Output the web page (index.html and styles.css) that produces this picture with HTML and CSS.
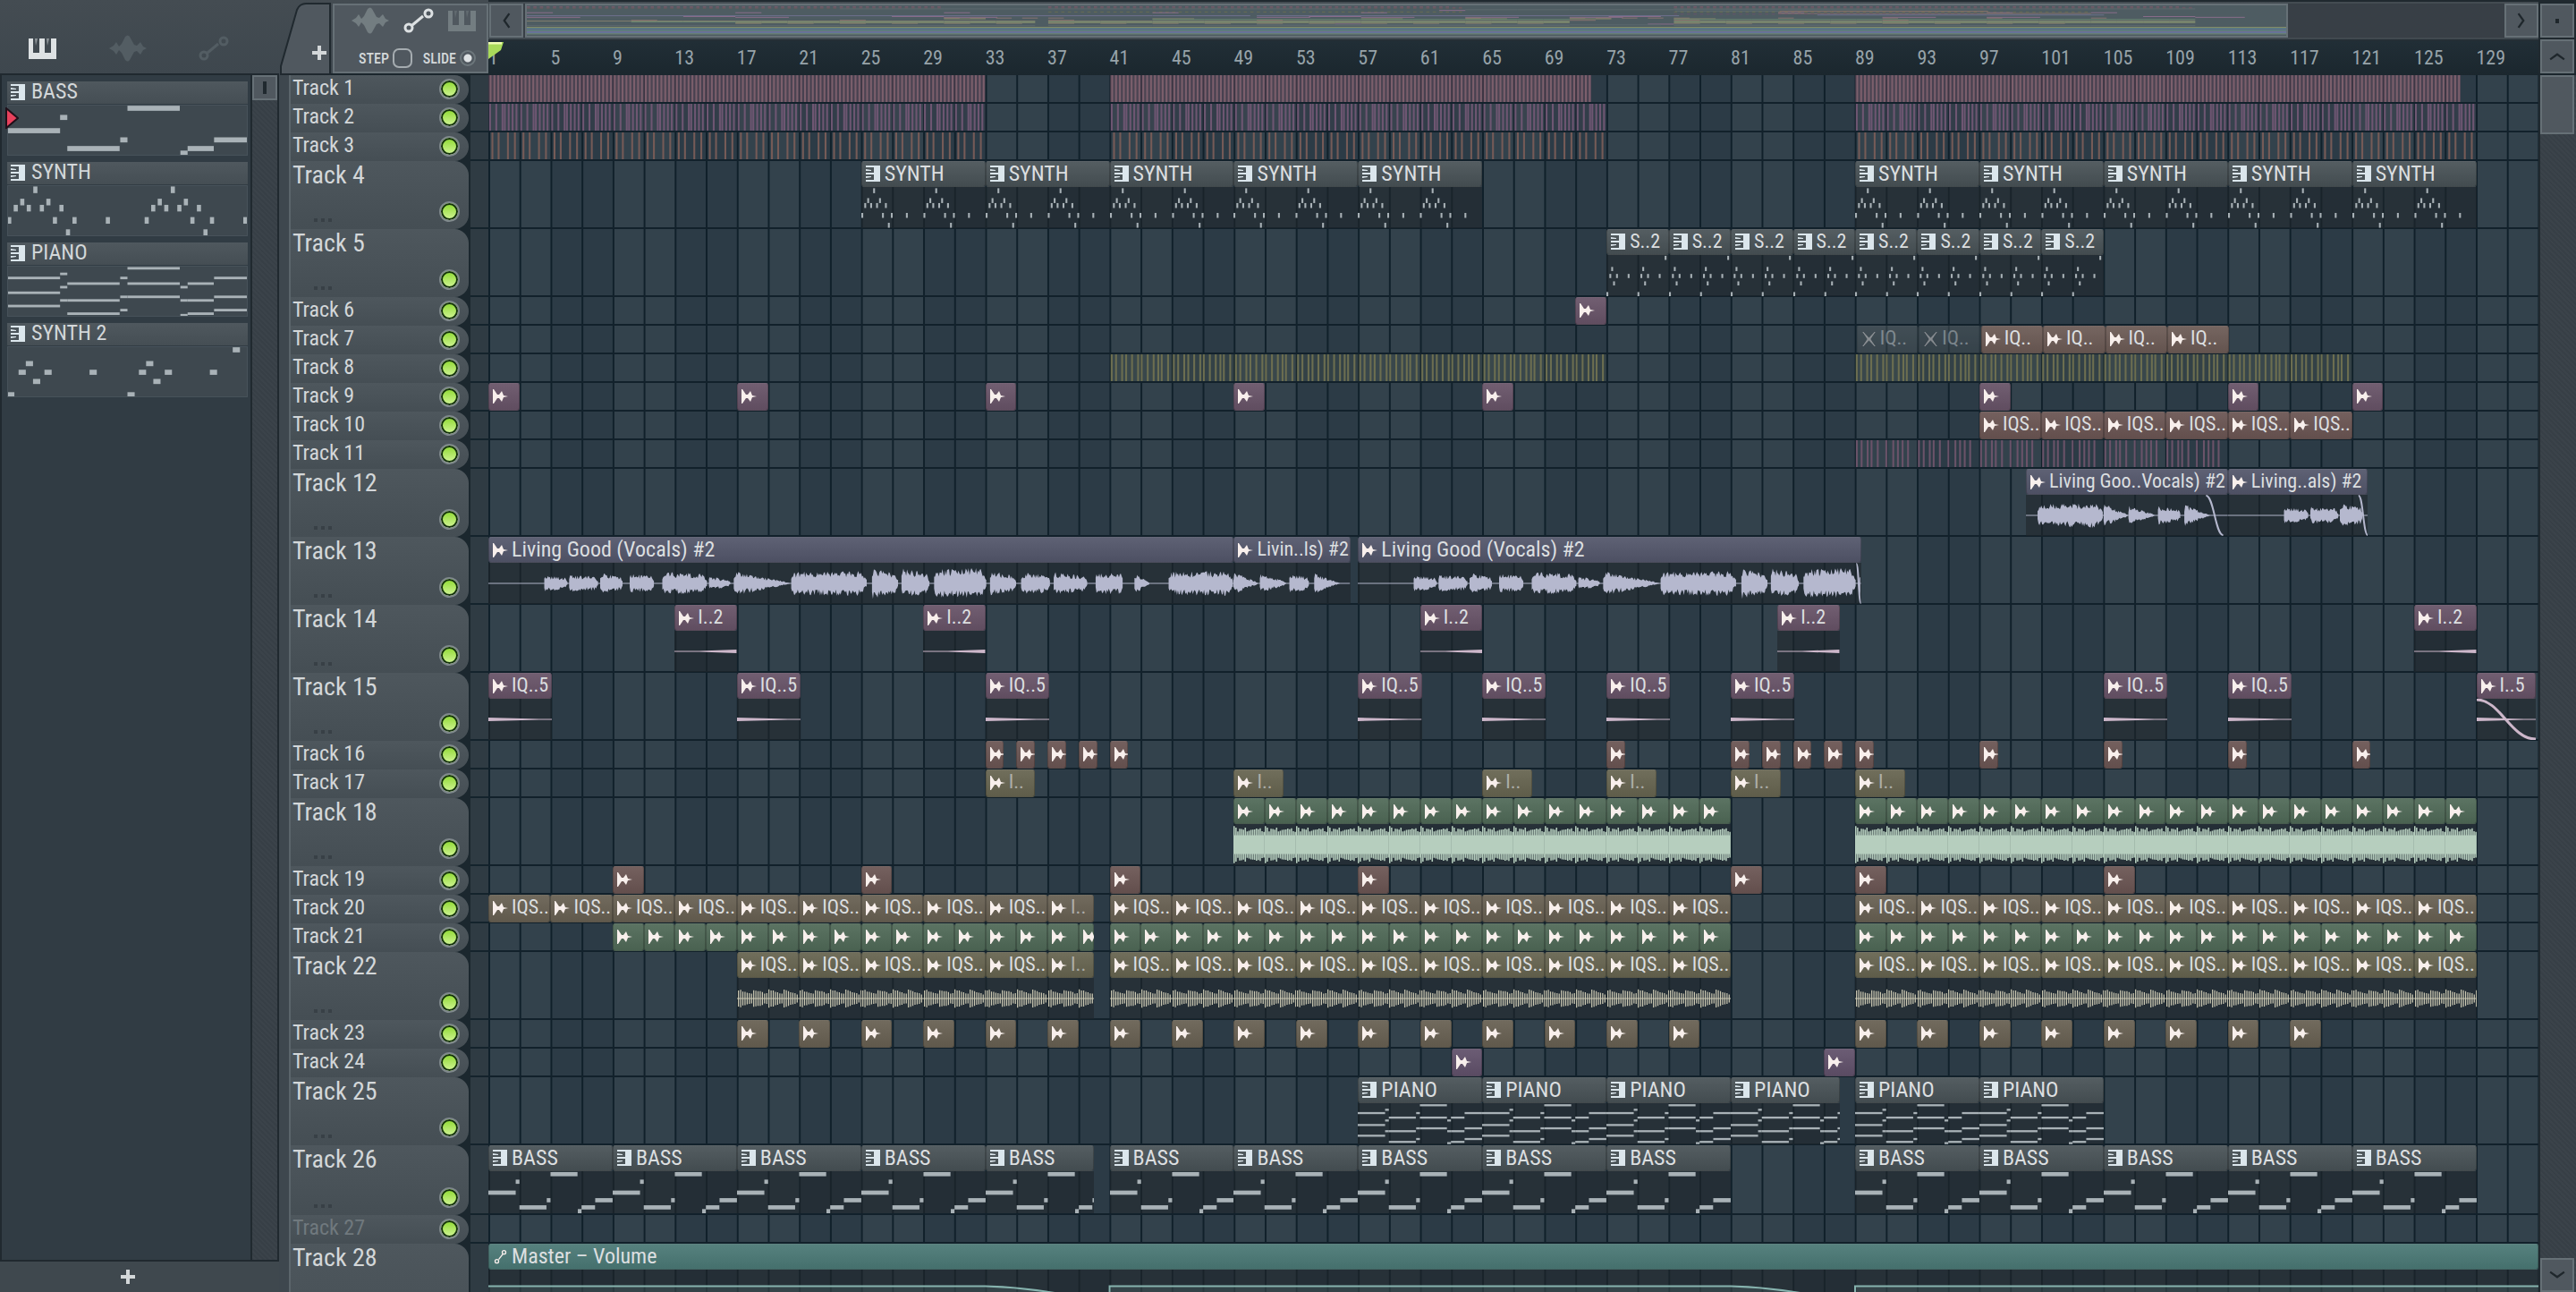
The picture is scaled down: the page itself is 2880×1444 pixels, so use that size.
FILE: index.html
```html
<!DOCTYPE html>
<html lang="en">
<head>
    <meta charset="utf-8">
    <title>Playlist</title>
    <link rel="stylesheet" href="styles.css">
</head>
<body>
    <svg class="defs" aria-hidden="true">
        <symbol id="i-keys" viewBox="0 0 31 23">
            <path d="M0 0H5V16H12V0H18V16H25V0H31V23H0Z"/>
            <path d="M7 0H10L8 8ZM20 0H23L21 8Z" opacity=".5"/>
        </symbol>
        <symbol id="i-wave" viewBox="0 0 42 30">
            <path d="M0 15L5 12L8 8L11 13L14 10L18 2Q21 -1 23 2L28 11L31 12L35 8L38 13L42 15L38 17L35 22L31 18L28 19L23 28Q21 31 18 28L14 20L11 17L8 22L5 18Z"/>
        </symbol>
        <symbol id="i-auto" viewBox="0 0 34 28">
            <path d="M10 19L22 9" fill="none" stroke="currentColor" stroke-width="3"/>
            <circle cx="6" cy="22" r="4" fill="none" stroke="currentColor" stroke-width="3"/>
            <circle cx="28" cy="6" r="4" fill="none" stroke="currentColor" stroke-width="3"/>
        </symbol>
        <symbol id="i-link" viewBox="0 0 20 24">
            <path d="M7 16L14 7" fill="none" stroke="currentColor" stroke-width="2"/>
            <circle cx="4" cy="19" r="3" fill="none" stroke="currentColor" stroke-width="2"/>
            <circle cx="16" cy="4" r="3" fill="none" stroke="currentColor" stroke-width="2"/>
        </symbol>
        <symbol id="i-pattern" viewBox="0 0 16 18">
            <path d="M9 0H16V18H9ZM0 0H10V2H0ZM0 16H10V18H0ZM0 8H10V10H0ZM0 4L6 5V6H0ZM0 12H6V13L0 14Z"/>
        </symbol>
        <symbol id="i-audio" viewBox="0 0 17 16">
            <path d="M0 0H1L5 6H7L10 2L12 7L17 8L12 9L10 14L7 10H5L1 16H0Z"/>
        </symbol>
        <symbol id="i-muted" viewBox="0 0 17 18">
            <path d="M1 0L8.500 8L16 0L10 9L16 18L8.500 10L1 18L7 9Z" stroke="currentColor"/>
        </symbol>
        <symbol id="i-plus" viewBox="0 0 16 16">
            <path d="M6 0H10V6H16V10H10V16H6V10H0V6H6Z"/>
        </symbol>
        <symbol id="i-chevron" viewBox="0 0 8 16">
            <path d="M7 1L2 8L7 15" fill="none" stroke="currentColor" stroke-width="2"/>
        </symbol>
    </svg>

    <div class="app">
        <aside class="picker">
            <div class="picker-tabs">
                <button class="tab active" aria-label="Patterns"><svg width="31" height="23"><use href="#i-keys"/></svg></button>
                <button class="tab" aria-label="Audio clips"><svg width="42" height="30"><use href="#i-wave"/></svg></button>
                <button class="tab" aria-label="Automation clips"><svg width="34" height="28"><use href="#i-auto"/></svg></button>
            </div>
            <div class="picker-body">
                <div class="pattern-list" id="patterns"></div>
                <div class="scroll">
                    <button class="scroll-thumb small" aria-label="Scroll patterns"></button>
                </div>
            </div>
            <button class="add-pattern" aria-label="Add pattern"><svg width="16" height="16"><use href="#i-plus"/></svg></button>
        </aside>

        <main class="playlist">
            <header class="top">
                <button class="add-track" aria-label="Add">
                    <svg class="tab-shape" width="58" height="82" viewBox="0 0 58 82">
                        <path d="M2 81V72L20 9Q23 2 30 2H57V81Z"/>
                    </svg>
                    <svg class="plus" width="16" height="16"><use href="#i-plus"/></svg>
                </button>
                <div class="tools">
                    <div class="tool-icons">
                        <button class="tool" aria-label="Audio"><svg width="42" height="30"><use href="#i-wave"/></svg></button>
                        <button class="tool active" aria-label="Automation"><svg width="34" height="28"><use href="#i-auto"/></svg></button>
                        <button class="tool" aria-label="Patterns"><svg width="31" height="23"><use href="#i-keys"/></svg></button>
                    </div>
                    <div class="tool-options">
                        <label class="option">STEP<input type="checkbox" class="step"></label>
                        <label class="option">SLIDE<input type="checkbox" class="slide" checked></label>
                    </div>
                </div>
                <div class="timeline">
                    <div class="overview">
                        <button class="nav" aria-label="Scroll left"><svg width="10" height="18"><use href="#i-chevron"/></svg></button>
                        <div class="overview-bar">
                            <svg class="minimap" id="minimap" viewBox="0 0 135 36" preserveAspectRatio="none"></svg>
                        </div>
                        <button class="nav" aria-label="Scroll right"><svg class="flip" width="10" height="18"><use href="#i-chevron"/></svg></button>
                    </div>
                    <div class="ruler" id="ruler"></div>
                </div>
                <div class="corner">
                    <button class="nav dot" aria-label="Zoom"></button>
                    <button class="nav" aria-label="Scroll up"><svg class="up" width="10" height="18"><use href="#i-chevron"/></svg></button>
                </div>
            </header>
            <div class="content">
                <div class="tracks" id="tracks"></div>
                <div class="scroll wide">
                    <button class="scroll-thumb" aria-label="Scroll tracks"></button>
                    <button class="nav" aria-label="Scroll down"><svg class="down" width="10" height="18"><use href="#i-chevron"/></svg></button>
                </div>
            </div>
        </main>
    </div>
    <script src="playlist.js"></script>
</body>
</html>
```
FILE: styles.css
```css
* {
    box-sizing: border-box;
}
body {
    margin: 0;
    background-color: #41494f;
    color: #d3d7d9;
    font-family: "Roboto Condensed", "Liberation Sans", sans-serif;
    font-size: 24px;
}
button {
    border: none;
    padding: 0;
    background: none;
    color: inherit;
    font: inherit;
    cursor: pointer;
}
svg {
    display: block;
    fill: currentColor;
}
.defs {
    display: none;
}
.app {
    display: flex;
    height: 100vh;
    overflow: hidden;
    background: linear-gradient(#444c52, #3e474e 84px);
}

/* Pattern picker */
.picker {
    display: flex;
    flex-direction: column;
    flex: none;
    width: 312px;
}
.picker-tabs {
    display: flex;
    align-items: flex-end;
    justify-content: space-between;
    height: 82px;
    padding: 0 56px 12px 32px;
}
.tab {
    display: flex;
    align-items: center;
    height: 32px;
    color: #535d63;
}
.tab.active {
    color: #dde1e3;
}
.picker-body {
    display: flex;
    flex: 1;
    min-height: 0;
    border: 2px solid #20292f;
    background-color: #313c44;
}
.pattern-list {
    flex: 1;
    padding: 7px 3px 0 6px;
}
.pattern {
    position: relative;
    height: 83px;
    margin-bottom: 7px;
}
.pattern-name {
    display: flex;
    gap: 7px;
    height: 25px;
    padding-left: 4px;
    line-height: 22px;
    background: linear-gradient(#4f585e, #454e54);
}
.pattern-name svg {
    margin-top: 3px;
    color: #dbe6ec;
}
.pattern .notes {
    width: 100%;
    height: 57px;
    margin-top: 1px;
    background-color: #3e484f;
    outline: 1px solid #47525a;
    outline-offset: -1px;
}
.pattern .marker {
    position: absolute;
    left: -2px;
    top: 29px;
    color: #e8415c;
}
.notes {
    color: #a9b2b7;
}
.scroll {
    display: flex;
    flex-direction: column;
    width: 30px;
    border-left: 2px solid #20292f;
    background: repeating-linear-gradient(45deg, #373f46 0 2px, #3b434a 2px 4px);
}
.scroll-thumb {
    height: 66px;
    border: 2px solid #667076;
    background-color: #50585f;
}
.scroll-thumb.small {
    display: flex;
    align-items: center;
    justify-content: center;
    height: 28px;
}
.scroll-thumb.small::after {
    content: "";
    width: 4px;
    height: 14px;
    background-color: #20292f;
}
.add-pattern {
    display: flex;
    align-items: center;
    justify-content: center;
    height: 34px;
    padding-right: 26px;
    background-color: #3f484e;
}

/* Playlist header */
.playlist {
    display: flex;
    flex-direction: column;
    flex: 1;
    min-width: 0;
    margin-left: 11px;
}
.top {
    display: flex;
    flex: none;
    height: 84px;
    border-bottom: 2px solid #1b262d;
}
.add-track {
    position: relative;
    width: 47px;
    height: 82px;
}
.tab-shape {
    position: absolute;
    right: 0;
    top: 2px;
    fill: #50585f;
    stroke: #20292f;
    stroke-width: 2px;
}
.plus {
    position: absolute;
    left: 26px;
    top: 51px;
}
.tools {
    display: flex;
    flex-direction: column;
    justify-content: space-between;
    flex: none;
    width: 174px;
    margin: 4px 0 0 2px;
    padding: 2px 12px 4px 19px;
    border: 2px solid #667076;
    background-color: #50585f;
}
.tool-icons, .tool-options {
    display: flex;
    align-items: center;
    justify-content: space-between;
}
.tool {
    color: #737d81;
}
.tool.active {
    color: #dde1e3;
}
.option {
    display: flex;
    align-items: center;
    gap: 4px;
    padding-left: 8px;
    font-size: 16px;
    font-weight: 500;
}
.option input {
    appearance: none;
    margin: 0;
    width: 22px;
    height: 22px;
    border: 2px solid #a5acb0;
    border-radius: 7px;
}
.option .slide {
    width: 18px;
    height: 18px;
    border-color: #6d777c;
    border-radius: 50%;
    background: radial-gradient(circle, #dde1e3 0 4px, transparent 5px);
}
.timeline {
    display: flex;
    flex-direction: column;
    flex: 1;
    min-width: 0;
}
.overview {
    display: flex;
    height: 46px;
    padding: 2px 0 2px 1px;
    border-top: 2px solid #20292f;
    border-bottom: 2px solid #242e35;
}
.overview-bar {
    flex: 1;
    background-color: #383f46;
}
.minimap {
    width: 89%;
    height: 100%;
    margin-left: 2px;
    border: 2px solid #667076;
    background-color: #4e5c62;
}
.nav {
    display: flex;
    align-items: center;
    justify-content: center;
    flex: none;
    width: 38px;
    height: 38px;
    border: 2px solid #667076;
    background-color: #50585f;
    color: #1f272c;
}
.flip {
    transform: rotate(180deg);
}
.up {
    transform: rotate(90deg);
}
.down {
    transform: rotate(-90deg);
}
.corner {
    display: flex;
    flex-direction: column;
    gap: 2px;
    width: 42px;
    padding: 4px 2px 0;
    background-color: #20292f;
}
.dot::after {
    content: "";
    width: 4px;
    height: 5px;
    background-color: #1f272c;
}
.ruler {
    position: relative;
    display: flex;
    flex: 1;
    background: linear-gradient(#212e36, #1b272e);
    color: #97a3a9;
    font-size: 22px;
    line-height: 38px;
}
.ruler span {
    flex: 1 1 0;
    width: 0;
}
.playhead {
    position: absolute;
    left: 0;
    top: 1px;
}

/* Tracks */
.content {
    display: flex;
    flex: 1;
    min-height: 0;
}
.tracks {
    flex: 1;
    min-width: 0;
    overflow: hidden;
    background-color: #1b272e;
}
.scroll.wide {
    justify-content: space-between;
    width: 42px;
    padding-right: 2px;
}
.row {
    display: flex;
    height: 32px;
}
.row.tall {
    height: 76px;
}
.row.roomy {
    height: 78px;
}
.row.large {
    height: 120px;
}
.track-head {
    position: relative;
    flex: none;
    width: 201px;
    padding-left: 2px;
    border-left: 2px solid #5b656b;
    border-radius: 0 16px 16px 0;
    background: linear-gradient(#4e575d, #454e54);
    line-height: 28px;
}
.tall .track-head {
    font-size: 28px;
    line-height: 32px;
}
.dim .track-head {
    color: #70797e;
}
.track-head input {
    appearance: none;
    position: absolute;
    right: 10px;
    bottom: 5px;
    width: 23px;
    height: 23px;
    margin: 0;
    border: 2px solid #7f888c;
    border-radius: 50%;
    background: linear-gradient(#8cd82e, #d3f59a);
    box-shadow: inset 0 0 0 2px #14310d;
}
.tall .track-head input {
    bottom: 8px;
}
.more {
    position: absolute;
    left: 26px;
    bottom: 8px;
    width: 20px;
    height: 4px;
    background: repeating-linear-gradient(90deg, #384046 0 4px, transparent 4px 8px);
}
.gutter {
    flex: none;
    width: 20px;
    margin-left: 2px;
    border-bottom: 2px solid #14232c;
    background-color: #2f3b43;
}
.lane {
    position: relative;
    flex: 1;
    min-width: 0;
    border-bottom: 2px solid #12212b;
    background-image:
        linear-gradient(90deg, #10202a 2px, transparent 2px),
        linear-gradient(90deg, #33424c 50%, #2c3b46 50%);
    background-size: calc(100% / 66) 100%, calc(100% * 8 / 132) 100%;
}

/* Clips */
.clip {
    position: absolute;
    top: 0;
    bottom: -1px;
    display: flex;
    flex-direction: column;
    overflow: hidden;
}
.clip-name {
    display: flex;
    flex: 1;
    padding-left: 4px;
    border: 1px solid #0003;
    border-top-color: #fff2;
    border-radius: 3px;
    background-image: linear-gradient(#fff1, #0001);
    line-height: 26px;
    white-space: nowrap;
    color: #dcdfe0;
}
.clip-name svg {
    flex: none;
    width: 17px;
    height: 16px;
    margin: 6px 4px 0 0;
    color: #f8efec;
}
.pattern-clip .clip-name svg {
    width: 16px;
    height: 18px;
    margin: 4px 5px 0 0;
    color: #dbe6ec;
}
.compact .clip-name {
    font-size: 22px;
}
.tall .clip-name {
    flex: none;
    height: 29px;
}
.clip-body {
    width: 100%;
    height: 47px;
    background-color: #1f262b99;
}
.clip.muted {
    opacity: 0.45;
}
.clip.faded .clip-text {
    opacity: 0.6;
}
.stripes {
    position: absolute;
    top: 0;
    height: 100%;
}
.c-pattern { background-color: #485156; }
.c-vocal { background-color: #53566a; }
.c-purple { background-color: #675367; }
.c-violet { background-color: #60506a; }
.c-brown { background-color: #6b5a55; }
.c-red { background-color: #6a5552; }
.c-olive { background-color: #66644f; }
.c-sand { background-color: #675f51; }
.c-green { background-color: #4f6957; }
.c-auto { background-color: #4a7875; }
.w-vocal { color: #b5b8ce; }
.w-purple { color: #cdb7ca; }
.w-olive { color: #cdcab4; }
.w-green { color: #b6cebe; }
.w-auto { color: #86b3ae; }
```
FILE: playlist.js
```js
const BARS = 132;

// [bar, length in bars, vertical position 0..1]
const BASS = [[0, 1.76, .51], [1.76, .24, .25], [2, 1.74, .86], [3.76, .24, .69], [4, 1.74, .07],
    [5.76, .24, .95], [6, .87, .86], [6.88, 1.12, .69]];
const PIANO = [
    [0, 1.76, [.24, .53, .79]], [1.76, .24, [.16, .42, .68]], [2, 1.74, [.35, .68, .94]],
    [3.76, .24, [.24, .61, .87]], [4, 1.74, [.05, .35, .61]], [5.76, .24, [.42, .68, .97]],
    [6, .87, [.35, .68, .94]], [6.88, 1.12, [.24, .61, .87]]
].flatMap(([x, w, ys]) => ys.map(y => [x, w, y]));
const SYNTH_STEPS = [.69, .45, .33, .45, .09, .45, .33, .69, .45, .93, .69];
const SYNTH = [0, 4].flatMap(o => [...SYNTH_STEPS.map((y, i) => [o + i * .19, .12, y]), [o + 2.87, .12, .69]]);
const SYNTH2 = [0, 2].flatMap(o => [[o, .12, .95], [o + .19, .12, .51], [o + .31, .12, .34],
    [o + .43, .12, .69], [o + .62, .12, .51], [o + 1.37, .12, .51]]).concat([[3.75, .12, .07]]);

function notes(list, bars, size, cls) {
    const rects = list.map(([x, w, y]) => `<rect x="${x}" y="${y * 100 - size / 2}" width="${w}" height="${size}"/>`).join("");
    return `<svg class="notes ${cls}" viewBox="0 0 ${bars} 100" preserveAspectRatio="none">${rects}</svg>`;
}

// Small repeatable noise so the waveforms never change between loads
function noise(i) {
    const v = Math.sin(i * 12.9898) * 43758.5453;
    return v - Math.floor(v);
}

// Envelope segments: [from bar, to bar, start level, end level]
const VOCAL = [[3.6, 5.1, 8, 5], [5.2, 7.1, 8, 7], [7.2, 8.7, 10, 6], [9.1, 10.7, 9, 7], [11.2, 14.1, 11, 9],
    [14.2, 15.6, 7, 3], [15.8, 19.4, 12, 1], [19.5, 24.4, 11, 12], [24.7, 26.4, 15, 9], [26.6, 28.4, 14, 10],
    [28.7, 32.1, 13, 15], [32.3, 34, 12, 7], [34.3, 36.2, 10, 9], [36.4, 38.6, 11, 7], [39.1, 40.9, 10, 10],
    [41.6, 42.6, 10, 1], [43.8, 48, 11, 12]];
const VOCAL_B = [[0, 1.6, 11, 1], [1.7, 3.4, 9, 2], [3.6, 4.9, 9, 6], [5.2, 6.9, 10, 0]];
const VOCAL_C = [[.75, 5, 11, 12], [5, 6.6, 11, 1], [6.6, 8.3, 9, 1], [8.5, 10, 9, 5], [10.2, 11.9, 11, 0]];
const VOCAL_D = [[3.6, 5.2, 8, 5], [5.3, 7.1, 8, 7], [7.2, 8.7, 11, 8]];

function wave(segments, bars, fade) {
    let d = "";
    for (const [from, to, a, b] of segments) {
        let top = "", bottom = "";
        for (let x = from; x < Math.min(to, bars); x += .06) {
            const t = (x - from) / (to - from);
            const edge = Math.min(1, t * 12 + .6, (1 - t) * 7 + .25);
            const level = (a + (b - a) * t) * edge;
            top += `L${x.toFixed(2)} ${(24 - level * (.6 + noise(x * 9) * .65)).toFixed(1)}`;
            bottom = `L${x.toFixed(2)} ${(24 + level * (.6 + noise(x * 7) * .65)).toFixed(1)}` + bottom;
        }
        d += `M${from} 24${top}${bottom}Z`;
    }
    const line = fade ? `<path d="M${fade[0]} 1C${fade[0] + fade[2]} 1 ${fade[1] - fade[2]} 47 ${fade[1]} 47" fill="none" stroke="currentColor" stroke-width="2" vector-effect="non-scaling-stroke"/>` : "";
    return `<path d="${d}"/><rect y="23.500" width="${bars}" height="1"/>${line}`;
}
function drums(bars) {
    let d = `M0 13H${bars}V35H0Z`;
    for (let x = 0; x < bars; x += .12) {
        const h = 15 + 5 * noise(x * 17 + 1) + (x < .15 ? 2 : 0);
        d += `M${x.toFixed(2)} ${(24 - h).toFixed(1)}h.09V${(24 + h).toFixed(1)}h-.09Z`;
    }
    return `<path d="${d}"/>`;
}
function hats(bars) {
    let d = `M0 23.500H${bars}V24.500H0Z`;
    for (let x = .06, i = 0; x < bars; x += .14, i++) {
        const h = 9.5 - (i % 7) * .8 + noise(i) * 1.5;
        d += `M${x.toFixed(2)} ${24 - h}h.07V${24 + h}h-.07Z`;
    }
    return `<path d="${d}"/>`;
}
const swell = bars => `<path d="M0 23.500H${bars * .4}L${bars} 22V26L${bars * .4} 24.500H0Z"/>`;
const decay = (bars, fade) => `<path d="M0 22L${bars * .8} 23.500H${bars}V24.500H${bars * .8}L0 26Z"/>` +
    (fade ? `<path d="M0 1C1.5 1 2.2 47 ${bars} 47" fill="none" stroke="currentColor" stroke-width="3" vector-effect="non-scaling-stroke"/>` : "");

const range = (from, to, step) => {
    const out = [];
    for (let b = from; b < to; b += step) out.push(b);
    return out;
};
const clips = (starts, len, name, extra) => starts.map(bar => ({ bar, len, name, ...extra }));

const pattern = (starts, len, name, list, size) => clips(starts, len, name,
    { color: "pattern", icon: "pattern", body: b => list.filter(n => n[0] < b), size });

const STEADY = [[1, 32], [41, 32], [89, 40]];
const TRACKS = [
    { stripes: [[1, 32], [41, 31], [89, 39]], fill: "#7c5f6c", tint: "#5b4656", period: 1, at: [.08, .33, .58, .83] },
    { stripes: STEADY, fill: "#6e5672", tint: "#5a4a6040", period: 2, at: [.05, .45, .85, 1, 1.25, 1.5, 1.75] },
    { stripes: STEADY, fill: "#755b57", period: 2, at: [.2, .6, 1.2, 1.65] },
    { tall: true, clips: pattern([25, 33, 41, 49, 57, 89, 97, 105, 113, 121], 8, "SYNTH", SYNTH, 12) },
    { tall: true, clips: pattern(range(73, 105, 4), 4, "S..2", SYNTH2, 10) },
    { clips: clips([71], 2, "", { color: "purple" }) },
    { clips: [...clips([89.1, 93.1], 4, "IQ..", { color: "pattern", muted: true, icon: "muted" }),
        ...clips([97.1, 101.1, 105.1, 109.1], 4, "IQ..", { color: "brown" })] },
    { stripes: [[41, 32], [89, 32]], fill: "#6c6e50", tint: "#60664d40", period: 4,
        at: [.05, .33, .72, .98, 1.36, 1.75, 1.98, 2.37, 2.75, 3.05, 3.27, 3.68] },
    { clips: clips([1, 17, 33, 49, 65, 97, 113, 121], 2, "", { color: "purple" }) },
    { clips: clips(range(97, 121, 4), 4, "IQS..", { color: "red" }) },
    { stripes: [[89, 23.5]], fill: "#6a5369", period: 4, at: [.05, .36, .75, 1, 1.4, 1.95, 2.4, 2.7, 3, 3.35] },
    { tall: true, clips: [
        { bar: 100, len: 13, name: "Living Goo..Vocals) #2", color: "vocal", draw: b => wave(VOCAL_C, b, [11.6, 12.7, .5]) },
        { bar: 113, len: 9, name: "Living..als) #2", color: "vocal", draw: b => wave(VOCAL_D, b, [8.4, 9, .3]) }] },
    { tall: true, clips: [
        { bar: 1, len: 48, name: "Living Good (Vocals) #2", color: "vocal", draw: b => wave(VOCAL, b) },
        { bar: 49, len: 7.5, name: "Livin..ls) #2", color: "vocal", draw: b => wave(VOCAL_B, b) },
        { bar: 57, len: 32.4, name: "Living Good (Vocals) #2", color: "vocal", draw: b => wave(VOCAL, b, [32.1, 32.4, .15]) }] },
    { tall: true, clips: clips([13, 29, 61, 84, 125], 4, "I..2", { color: "purple", draw: swell }) },
    { tall: true, clips: [...clips([1, 17, 33, 57, 65, 73, 81, 105, 113], 4.1, "IQ..5", { color: "purple", draw: b => decay(b, false) }),
        { bar: 129, len: 3.8, name: "I..5", color: "purple", draw: b => decay(b, true) }] },
    { clips: clips([33, 35, 37, 39, 41, 73, 81, 83, 85, 87, 89, 97, 105, 113, 121], 1.2, "", { color: "red" }) },
    { clips: clips([33, 49, 65, 73, 81, 89], 3.2, "I..", { color: "olive", faded: true }) },
    { tall: true, clips: clips([...range(49, 81, 2), ...range(89, 129, 2)], 2, "", { color: "green", draw: drums }) },
    { clips: clips([9, 25, 41, 57, 81, 89, 105], 2, "", { color: "red" }) },
    { clips: [...clips([...range(1, 37, 4), ...range(41, 81, 4), ...range(89, 129, 4)], 4, "IQS..", { color: "sand" }),
        { bar: 37, len: 3, name: "I..", color: "sand", faded: true }] },
    { clips: [...clips([...range(9, 39, 2), ...range(41, 81, 2), ...range(89, 129, 2)], 2, "", { color: "green" }),
        { bar: 39, len: 1, name: "", color: "green" }] },
    { tall: true, clips: [
        ...clips([...range(17, 37, 4), ...range(41, 81, 4), ...range(89, 129, 4)], 4, "IQS..", { color: "olive", draw: hats }),
        { bar: 37, len: 3, name: "I..", color: "olive", faded: true, draw: hats }] },
    { clips: clips([...range(17, 81, 4), ...range(89, 121, 4)], 2, "", { color: "sand" }) },
    { clips: clips([63, 87], 2, "", { color: "violet" }) },
    { tall: true, clips: [...pattern([57, 65, 73, 89, 97], 8, "PIANO", PIANO, 5), ...pattern([81], 7, "PIANO", PIANO, 5)] },
    { tall: true, size: "roomy", clips: [
        ...pattern([1, 9, 17, 25, 41, 49, 57, 65, 73, 89, 97, 105, 113, 121], 8, "BASS", BASS, 10),
        ...pattern([33], 7, "BASS", BASS, 10)] },
    { dim: true },
    { tall: true, size: "large", clips: [{ bar: 1, len: 132, name: "Master – Volume", color: "auto", icon: "link",
        draw: () => `<path d="M-1 19H32Q36 21 40 40V19H80Q84 21 88 40V19H133V60H-1Z" fill-opacity=".15" stroke="currentColor" stroke-width="2" vector-effect="non-scaling-stroke"/>` }] }
];

const pct = bars => (bars / BARS * 100).toFixed(3) + "%";

function clipHtml(c) {
    let body = "";
    if (c.body) body = notes(c.body(c.len), c.len, c.size, "clip-body");
    if (c.draw) body = `<svg class="clip-body w-${c.color}" viewBox="0 0 ${c.len} 48" preserveAspectRatio="none">${c.draw(c.len)}</svg>`;
    const cls = ["clip", c.body && "pattern-clip", c.name.includes("..") && "compact",
        c.muted && "muted", c.faded && "faded"].filter(Boolean).join(" ");
    const text = c.name ? `<span class="clip-text">${c.name}</span>` : "";
    return `<div class="${cls}" style="left:${pct(c.bar - 1)};width:${pct(c.len)}">
        <div class="clip-name c-${c.color}"><svg><use href="#i-${c.icon || "audio"}"/></svg>${text}</div>${body}</div>`;
}

function stripesHtml(t) {
    return t.stripes.map(([bar, len]) => {
        let d = "";
        for (let b = 0; b < len; b += t.period)
            for (const o of t.at) if (b + o < len) d += `M${(b + o).toFixed(2)} 0h.12V1h-.12Z`;
        return `<svg class="stripes" viewBox="0 0 ${len} 1" preserveAspectRatio="none" style="left:${pct(bar - 1)};width:${pct(len)}">
            <rect width="${len}" height="1" fill="${t.tint || "none"}" opacity=".6"/><path d="${d}" fill="${t.fill}"/></svg>`;
    }).join("");
}

document.getElementById("tracks").innerHTML = TRACKS.map((t, i) => `
    <div class="${["row", t.tall && "tall", t.size, t.dim && "dim"].filter(Boolean).join(" ")}">
        <div class="track-head">
            <label for="on-${i}">Track ${i + 1}</label>
            ${t.tall ? '<span class="more"></span>' : ""}
            <input type="checkbox" id="on-${i}" checked>
        </div>
        <div class="gutter"></div>
        <div class="lane">${t.stripes ? stripesHtml(t) : (t.clips || []).map(clipHtml).join("")}</div>
    </div>`).join("");

document.getElementById("ruler").innerHTML = range(1, 133, 4).map(b => `<span>${b}</span>`).join("") +
    '<svg class="playhead" width="18" height="20"><path d="M0 0H17L14 9L0 19Z" fill="#a9da5a"/><path d="M0 1H15" stroke="#f0fbb5" stroke-width="3"/></svg>';

document.getElementById("patterns").innerHTML = [
    ["BASS", notes(BASS, 8, 10, "")], ["SYNTH", notes(SYNTH, 7, 13, "")],
    ["PIANO", notes(PIANO, 8, 5, "")], ["SYNTH 2", notes(SYNTH2, 4, 10, "")]
].map(([name, svg], i) => `
    <div class="pattern">
        <div class="pattern-name"><svg width="16" height="18"><use href="#i-pattern"/></svg>${name}</div>
        ${svg}
        ${i === 0 ? '<svg class="marker" width="15" height="24"><path d="M1 1L14 12L1 23Z" stroke="#20101a" stroke-width="2"/></svg>' : ""}
    </div>`).join("");

const MINI = { pattern: "#5d6a6f", vocal: "#6f7290", purple: "#8c6e8c", violet: "#8c6e8c", brown: "#8a7370",
    red: "#8a7370", olive: "#8c8c6c", sand: "#86806e", green: "#6e8c74", auto: "#7f9e9a" };
let mini = "";
TRACKS.slice(0, 27).forEach((t, i) => {
    const y = 1 + i * .9;
    (t.stripes || []).forEach(([b, len]) => range(b - 1, b - 1 + len, .5).forEach(x => {
        mini += `<rect x="${x}" y="${y}" width=".25" height=".9" fill="${t.fill}"/>`;
    }));
    (t.clips || []).forEach(c => {
        mini += `<rect x="${c.bar - 1}" y="${y}" width="${c.len}" height="1" fill="${MINI[c.color]}"/>`;
    });
});
["#8f9168", "#5f8f90", "#6a7fa8", "#6b9a8c", "#7770a3", "#6a7fa8", "#7d9a80"].forEach((c, i) => {
    mini += `<rect y="${25.5 + i * 1.3}" width="135" height=".9" fill="${c}"/>`;
});
document.getElementById("minimap").innerHTML = mini;
```
